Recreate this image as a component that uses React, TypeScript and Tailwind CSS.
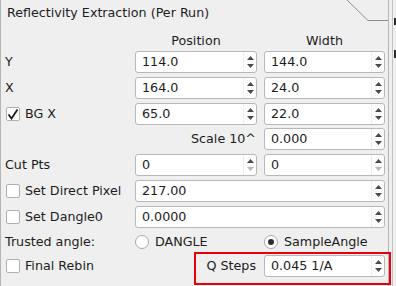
import React from 'react';

const font = "font-['DejaVu_Sans',sans-serif]";

const Arrows = ({ downOff = false }: { downOff?: boolean }) => (
  <div className="flex h-full w-[13px] flex-col items-center justify-center gap-[4px] border-l border-[#ededed]">
    <svg width="7" height="4" viewBox="0 0 7 4">
      <path d="M3.5 0L7 4H0z" fill="#4a4a4a" />
    </svg>
    <svg width="7" height="4" viewBox="0 0 7 4">
      <path d="M0 0H7L3.5 4z" fill={downOff ? '#b8b8b8' : '#4a4a4a'} />
    </svg>
  </div>
);

const SpinBox = ({ value, downOff, className = '' }: { value: string; downOff?: boolean; className?: string }) => (
  <div className={`flex h-[22px] items-center rounded-[3px] border border-[#b8b8b8] bg-white ${className}`}>
    <span className="flex-1 pl-[6px] leading-none">{value}</span>
    <Arrows downOff={downOff} />
  </div>
);

const Check = ({ on = false }: { on?: boolean }) => (
  <div className="flex h-[14px] w-[14px] items-center justify-center rounded-[2px] border border-[#b0b0b0] bg-white">
    {on && (
      <svg width="12" height="12" viewBox="0 0 12 12">
        <path d="M1.5 6.5L4.5 10.5L10.5 1.5" fill="none" stroke="#1a1a1a" strokeWidth="1.8" />
      </svg>
    )}
  </div>
);

const CheckLabel = ({ label, on }: { label: string; on?: boolean }) => (
  <div className="flex items-center gap-[5px] pl-[5px]">
    <Check on={on} />
    <span>{label}</span>
  </div>
);

const Radio = ({ label, on = false }: { label: string; on?: boolean }) => (
  <div className="flex items-center gap-[6px]">
    <div className="flex h-[14px] w-[14px] items-center justify-center rounded-full border border-[#a8a8a8] bg-white">
      {on && <div className="h-[6px] w-[6px] rounded-full bg-[#2e2e2e]" />}
    </div>
    <span>{label}</span>
  </div>
);

const cols = 'grid grid-cols-[127px_122px_121px] gap-x-[7px]';
const row = `${cols} h-[22px] items-center`;

export default function App() {
  return (
    <div className={`relative flex h-[286px] w-[396px] overflow-hidden bg-[#efefef] text-[12.7px] text-[#1c1c1c] ${font}`}>
      <div className="flex w-[389px] flex-col border-x border-[#b4b4b4]">
        <div className="flex h-[21px] shrink-0">
          <div className="flex-1 pl-[6px] pt-[5px] leading-[15px]">Reflectivity Extraction (Per Run)</div>
          <svg width="41" height="21" viewBox="0 0 41 21" className="shrink-0">
            <path d="M0 0L21 20.5H41" fill="none" stroke="#8c8c8c" strokeWidth="1" />
          </svg>
        </div>
        <div className={`${cols} h-[30px] items-end pb-[3px] leading-[15px]`}>
          <span />
          <span className="text-center">Position</span>
          <span className="text-center">Width</span>
        </div>

        <div className={row}>
          <span className="pl-[4px]">Y</span>
          <SpinBox value="114.0" />
          <SpinBox value="144.0" />
        </div>
        <div className={`${row} mt-[4px]`}>
          <span className="pl-[4px]">X</span>
          <SpinBox value="164.0" />
          <SpinBox value="24.0" />
        </div>
        <div className={`${row} mt-[4px]`}>
          <CheckLabel label="BG X" on />
          <SpinBox value="65.0" />
          <SpinBox value="22.0" />
        </div>
        <div className={`${row} mt-[3px]`}>
          <span />
          <span className="pr-[1px] text-right">Scale 10^</span>
          <SpinBox value="0.000" />
        </div>
        <div className={`${row} mt-[4px]`}>
          <span className="pl-[4px]">Cut Pts</span>
          <SpinBox value="0" downOff />
          <SpinBox value="0" downOff />
        </div>
        <div className={`${row} mt-[4px]`}>
          <CheckLabel label="Set Direct Pixel" />
          <SpinBox value="217.00" className="col-span-2" />
        </div>
        <div className={`${row} mt-[4px]`}>
          <CheckLabel label="Set Dangle0" />
          <SpinBox value="0.0000" className="col-span-2" />
        </div>
        <div className={`${cols} mt-[4px] h-[20px] items-center`}>
          <span className="pl-[4px]">Trusted angle:</span>
          <Radio label="DANGLE" />
          <Radio label="SampleAngle" on />
        </div>
        <div className={`${row} mt-[3px]`}>
          <CheckLabel label="Final Rebin" />
          <span className="pr-[1px] text-right">Q Steps</span>
          <SpinBox value="0.045 1/A" />
        </div>
      </div>

      <div className="flex w-[7px] pl-[3px]">
        <div className="flex flex-1 flex-col border-l border-[#c4c4c4] pl-[1px]">
          <div className="mt-[18px] h-[7px] w-[2px] bg-[#2a2a2a]" />
          <div className="mt-[25px] h-[8px] w-[2px] bg-[#2a2a2a]" />
        </div>
      </div>

      <div className="absolute left-[194px] top-[252px] h-[33px] w-[197px] border-2 border-[#e8000b]" />
    </div>
  );
}
